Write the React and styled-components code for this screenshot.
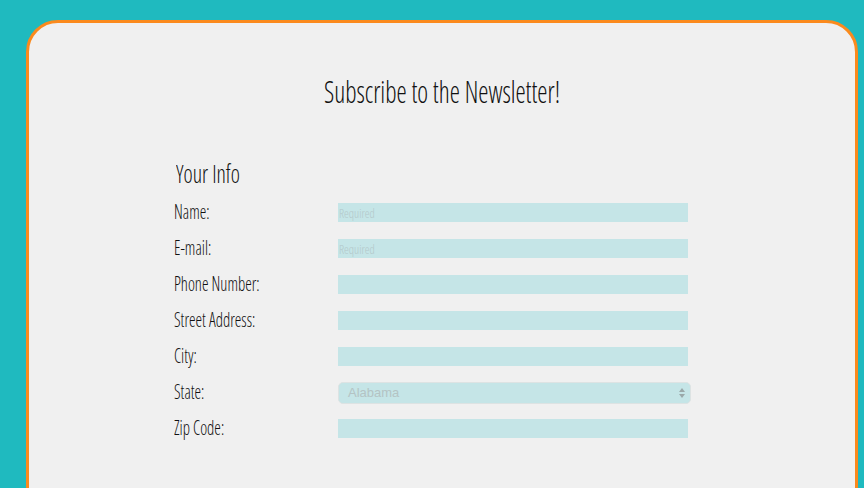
import styled, { createGlobalStyle } from "styled-components";

const Global = createGlobalStyle`
  html, body {
    margin: 0;
    padding: 0;
    background: #1fbabf;
    overflow: hidden;
  }
  body {
    font-family: "Open Sans", "DejaVu Sans", sans-serif;
    font-stretch: condensed;
    font-weight: 300;
    color: #111;
  }
`

const Page = styled.div`
  padding: 20px 6px 0 26px;
  height: 488px;
  box-sizing: border-box;
`
const Card = styled.div`
  background: #f0f0f0;
  border: 3px solid #fb8a1d;
  border-radius: 32px;
  height: 700px;
  box-sizing: border-box;
  padding-top: 48px;
`
const Title = styled.h1`
  margin: 0;
  text-align: center;
  font-size: 31px;
  font-weight: 300;
  line-height: 40px;
  transform: scaleX(0.83);
`
const Section = styled.div`
  margin: ${props => props.gap || 46}px 0 0 145px;
`
const SectionTitle = styled.h2`
  display: inline-block;
  margin: 0 0 5px 2px;
  font-size: 26px;
  font-weight: 300;
  line-height: 32px;
  transform: scaleX(0.84);
  transform-origin: left center;
`
const Row = styled.div`
  display: flex;
  align-items: center;
  height: 36px;
`
const LabelCell = styled.div`
  width: 164px;
  flex-shrink: 0;
`
const Label = styled.label`
  display: inline-block;
  font-size: 19.5px;
  line-height: 22px;
  transform: scaleX(0.85);
  transform-origin: left center;
  white-space: nowrap;
`
const Input = styled.input`
  width: 350px;
  height: 19px;
  box-sizing: border-box;
  border: none;
  background: #c5e5e7;
  padding: 2px 1px 0;
  font-family: inherit;
  font-stretch: condensed;
  font-weight: 300;
  font-size: 12px;
  outline: none;
  &::placeholder {
    color: #b3c8ca;
  }
`
const SelectBox = styled.div`
  position: relative;
  width: 353px;
  height: 22px;
  box-sizing: border-box;
  background: #c5e5e7;
  border: 1px solid #dde3e3;
  border-radius: 5px;
  display: flex;
  align-items: center;
  padding-left: 9px;
  margin-top: 1px;
  font-family: "Liberation Sans", Arial, sans-serif;
  font-stretch: normal;
  font-weight: 400;
  font-size: 13px;
  color: #b4c3c4;
`
const Arrows = styled.svg`
  position: absolute;
  right: 4px;
  top: 4px;
`

const fields = [
  ["Name:", "Required"],
  ["E-mail:", "Required"],
  ["Phone Number:", ""],
  ["Street Address:", ""],
  ["City:", ""],
  ["State:", null],
  ["Zip Code:", ""],
];

const App = () => {
  return (
    <Page>
      <Global />
      <Card>
        <Title>Subscribe to the Newsletter!</Title>
        <Section>
          <SectionTitle>Your Info</SectionTitle>
          {fields.map(([label, ph]) => (
            <Row key={label}>
              <LabelCell>
                <Label>{label}</Label>
              </LabelCell>
              {ph === null ? (
                <SelectBox>
                  Alabama
                  <Arrows width="8" height="12" viewBox="0 0 8 12">
                    <path d="M4 1 L7 5 L1 5 Z" fill="#9aa8a9" />
                    <path d="M4 11 L7 7 L1 7 Z" fill="#9aa8a9" />
                  </Arrows>
                </SelectBox>
              ) : (
                <Input placeholder={ph} />
              )}
            </Row>
          ))}
        </Section>
        <Section gap={46}>
          <SectionTitle>Your Interests</SectionTitle>
        </Section>
      </Card>
    </Page>
  );
};

export default App;
